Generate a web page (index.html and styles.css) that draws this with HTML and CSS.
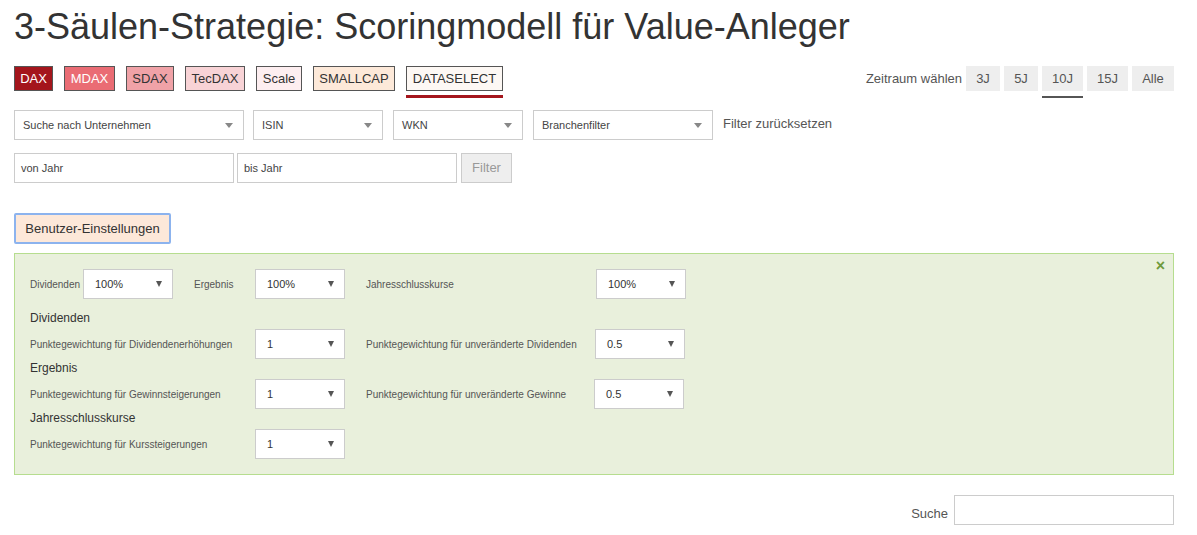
FILE: index.html
```html
<!DOCTYPE html>
<html lang="de">
<head>
<meta charset="utf-8">
<title>3-Säulen-Strategie</title>
<link rel="stylesheet" href="styles.css">
</head>
<body>
<div class="page">
  <h1 class="title">3-Säulen-Strategie: Scoringmodell für Value-Anleger</h1>

  <div class="toprow">
    <div class="indices">
      <span class="idx idx-dax">DAX</span>
      <span class="idx idx-mdax">MDAX</span>
      <span class="idx idx-sdax">SDAX</span>
      <span class="idx idx-tec">TecDAX</span>
      <span class="idx idx-scale">Scale</span>
      <span class="idx idx-small">SMALLCAP</span>
      <span class="idx idx-data active">DATASELECT</span>
    </div>
    <div class="range">
      <span class="range-label">Zeitraum wählen</span>
      <span class="rbtn rbtn-s">3J</span>
      <span class="rbtn rbtn-s">5J</span>
      <span class="rbtn rbtn-m active">10J</span>
      <span class="rbtn rbtn-m">15J</span>
      <span class="rbtn rbtn-l">Alle</span>
    </div>
  </div>

  <div class="filters">
    <div class="sel sel-company"><span>Suche nach Unternehmen</span><i class="caret"></i></div>
    <div class="sel sel-isin"><span>ISIN</span><i class="caret"></i></div>
    <div class="sel sel-wkn"><span>WKN</span><i class="caret"></i></div>
    <div class="sel sel-branch"><span>Branchenfilter</span><i class="caret"></i></div>
    <span class="reset">Filter zurücksetzen</span>
  </div>

  <div class="years">
    <div class="inp inp-year">von Jahr</div>
    <div class="inp inp-year">bis Jahr</div>
    <span class="btn-filter">Filter</span>
  </div>

  <button class="btn-settings">Benutzer-Einstellungen</button>

  <div class="panel">
    <span class="close">×</span>
    <div class="prow prow-top">
      <span class="lbl lbl-div">Dividenden</span>
      <div class="psel"><span>100%</span><i class="caret dark"></i></div>
      <span class="lbl lbl-erg">Ergebnis</span>
      <div class="psel"><span>100%</span><i class="caret dark"></i></div>
      <span class="lbl lbl-jahr">Jahresschlusskurse</span>
      <div class="psel"><span>100%</span><i class="caret dark"></i></div>
    </div>

    <div class="phead">Dividenden</div>
    <div class="prow">
      <span class="lbl lbl-wide">Punktegewichtung für Dividendenerhöhungen</span>
      <div class="psel"><span>1</span><i class="caret dark"></i></div>
      <span class="lbl lbl-mid">Punktegewichtung für unveränderte Dividenden</span>
      <div class="psel"><span>0.5</span><i class="caret dark"></i></div>
    </div>

    <div class="phead">Ergebnis</div>
    <div class="prow">
      <span class="lbl lbl-wide">Punktegewichtung für Gewinnsteigerungen</span>
      <div class="psel"><span>1</span><i class="caret dark"></i></div>
      <span class="lbl lbl-mid2">Punktegewichtung für unveränderte Gewinne</span>
      <div class="psel"><span>0.5</span><i class="caret dark"></i></div>
    </div>

    <div class="phead">Jahresschlusskurse</div>
    <div class="prow">
      <span class="lbl lbl-wide">Punktegewichtung für Kurssteigerungen</span>
      <div class="psel"><span>1</span><i class="caret dark"></i></div>
    </div>
  </div>

  <div class="search">
    <span class="search-label">Suche</span>
    <div class="inp inp-search"></div>
  </div>
</div>
</body>
</html>
```

FILE: styles.css
```css
* { box-sizing: border-box; }
html, body { margin: 0; padding: 0; background: #fff; }
body {
  font-family: "Liberation Sans", Arial, sans-serif;
  color: #333;
}
.page {
  width: 1197px;
  padding: 0 23px 0 14px;
}
.title {
  margin: 0;
  padding-top: 6px;
  font-size: 36px;
  font-weight: normal;
  line-height: 42px;
  color: #333;
}
.toprow {
  display: flex;
  justify-content: space-between;
  align-items: flex-start;
  margin-top: 18px;
  height: 44px;
}
.indices { display: flex; gap: 11px; }
.idx {
  display: block;
  height: 25px;
  line-height: 23px;
  padding: 0;
  text-align: center;
  font-size: 13px;
  border: 1px solid #555;
  color: #333;
  position: relative;
}
.idx-dax { width: 39px; background: #a4151c; color: #fff; }
.idx-mdax { width: 51px; background: #ea6c74; color: #fff; }
.idx-sdax { width: 48px; background: #f0a2a7; }
.idx-tec { width: 60px; background: #f8d3d6; }
.idx-scale { width: 46px; background: #fdeef0; }
.idx-small { width: 82px; background: #fde9d9; }
.idx-data { width: 97px; background: #fdf8f4; }
.idx.active::after {
  content: "";
  position: absolute;
  left: -1px; right: -1px;
  bottom: -8px;
  height: 3px;
  background: #a4151c;
}
.range {
  display: flex;
  align-items: center;
  gap: 4px;
}
.range-label {
  font-size: 13px;
  color: #555;
}
.rbtn {
  display: block;
  height: 25px;
  line-height: 25px;
  background: #eee;
  font-size: 13px;
  color: #555;
  position: relative;
  text-align: center;
}
.rbtn-s { width: 34px; }
.rbtn-m { width: 41px; }
.rbtn-l { width: 42px; }
.rbtn.active::after {
  content: "";
  position: absolute;
  left: 0; right: 0;
  bottom: -7px;
  height: 2px;
  background: #555;
}
.filters {
  display: flex;
  align-items: flex-start;
  height: 43px;
}
.sel {
  height: 30px;
  border: 1px solid #ccc;
  background: #fff;
  display: flex;
  align-items: center;
  justify-content: space-between;
  padding: 0 8px 0 8px;
  font-size: 11px;
  color: #444;
  margin-right: 10px;
}
.sel-company { width: 230px; margin-right: 9px; }
.sel-isin { width: 130px; }
.sel-wkn { width: 130px; }
.sel-branch { width: 180px; }
.caret {
  width: 0; height: 0;
  border-left: 4px solid transparent;
  border-right: 4px solid transparent;
  border-top: 5px solid #888;
  margin-right: 2px;
}
.caret.dark { border-top-color: #555; border-left-width: 3.5px; border-right-width: 3.5px; border-top-width: 6px; }
.reset {
  font-size: 13px;
  color: #555;
  margin-top: 6px;
}
.years {
  display: flex;
  align-items: flex-start;
  gap: 3px;
  height: 60px;
}
.inp {
  height: 30px;
  border: 1px solid #ccc;
  background: #fff;
  font-size: 11px;
  color: #444;
  padding: 0 6px;
  display: flex;
  align-items: center;
}
.inp-year { width: 220px; }
.btn-filter {
  display: block;
  height: 30px;
  line-height: 28px;
  width: 51px;
  text-align: center;
  border: 1px solid #ccc;
  background: #eee;
  color: #999;
  font-size: 13px;
  margin-left: 1px;
}
.btn-settings {
  display: block;
  height: 31px;
  width: 157px;
  padding: 0;
  margin: 0;
  font-family: "Liberation Sans", Arial, sans-serif;
  font-size: 13px;
  color: #333;
  background: #fde8d9;
  border: 2px solid #8cb3ee;
  border-radius: 2px;
}
.panel {
  position: relative;
  margin-top: 9px;
  width: 1160px;
  background: #e9f0dc;
  border: 1px solid #b6dd8f;
  padding: 15px;
}
.close {
  position: absolute;
  top: 3px;
  right: 8px;
  font-size: 16px;
  font-weight: bold;
  color: #6f9a3c;
}
.prow {
  display: flex;
  align-items: center;
  height: 30px;
}
.prow-top { margin-bottom: 10px; }
.lbl {
  font-size: 10px;
  color: #555;
  flex: none;
}
.lbl-div { width: 53px; }
.lbl-erg { width: 61px; margin-left: 21px; }
.lbl-jahr { width: 230px; margin-left: 21px; }
.lbl-wide { width: 225px; }
.lbl-mid { width: 229px; margin-left: 21px; }
.lbl-mid2 { width: 228px; margin-left: 21px; }
.psel {
  flex: none;
  width: 90px;
  height: 30px;
  border: 1px solid #ccc;
  background: #fff;
  display: flex;
  align-items: center;
  justify-content: space-between;
  padding: 0 8px 0 11px;
  font-size: 11px;
  color: #333;
}
.phead {
  font-size: 12px;
  color: #333;
  height: 20px;
  line-height: 18px;
}
.search {
  display: flex;
  justify-content: flex-end;
  align-items: center;
  margin-top: 20px;
  width: 1160px;
}
.search-label {
  font-size: 13px;
  color: #555;
  margin-right: 6px;
  margin-top: 6px;
}
.inp-search { width: 220px; height: 30px; }
```
